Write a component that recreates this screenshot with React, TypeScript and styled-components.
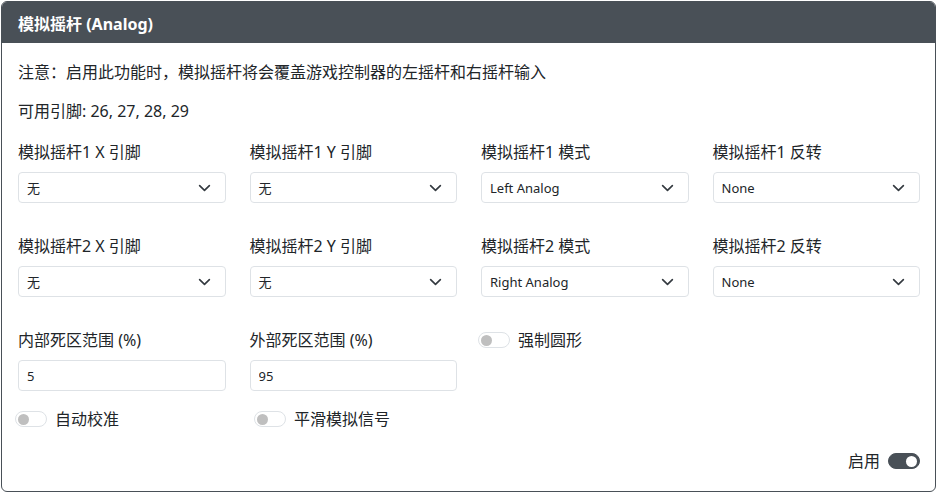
import React, { useState } from 'react'
import styled, { createGlobalStyle } from 'styled-components'

const GlobalStyle = createGlobalStyle`
  html, body {
    margin: 0;
    padding: 0;
    background: #ffffff;
  }
  body {
    font-family: "Noto Sans", "Noto Sans CJK SC", sans-serif;
    color: #212529;
  }
  * { box-sizing: border-box; }
`

const Page = styled.div`
  padding: 1px;
  width: 937px;
  height: 493px;
`

const Card = styled.div`
  width: 935px;
  height: 491px;
  border: 1px solid #495057;
  border-radius: 6px;
  overflow: hidden;
  display: flex;
  flex-direction: column;
`

const Header = styled.div`
  height: 41px;
  background: #495057;
  color: #ffffff;
  font-weight: bold;
  font-size: 16px;
  display: flex;
  align-items: center;
  padding-left: 16px;
`

const Body = styled.div`
  flex: 1;
  padding: 18px 16px 0 16px;
  display: flex;
  flex-direction: column;
`

const Text = styled.p<{ $gap: number }>`
  margin: 0 0 ${p => p.$gap}px 0;
  font-size: 16px;
  line-height: 22px;
`

const Grid = styled.div`
  display: grid;
  grid-template-columns: repeat(4, minmax(0, 1fr));
  column-gap: 24px;
  row-gap: 32px;
  width: 902px;
`

const Field = styled.div`
  display: flex;
  flex-direction: column;
  min-width: 0;
`

const Label = styled.label`
  font-size: 16px;
  line-height: 22px;
  margin-bottom: 9px;
`

const SelectBox = styled.div`
  height: 31px;
  border: 1px solid #dee2e6;
  border-radius: 4px;
  display: flex;
  align-items: center;
  justify-content: space-between;
  padding: 0 14px 0 8px;
  font-size: 13px;
  color: #212529;
  background: #fff;
`

const Input = styled.input`
  width: 100%;
  height: 31px;
  border: 1px solid #dee2e6;
  border-radius: 4px;
  padding: 0 8px;
  font-size: 13px;
  font-family: "Noto Sans", "Noto Sans CJK SC", sans-serif;
  color: #212529;
  outline: none;
`

const SwitchTrack = styled.span<{ $on: boolean }>`
  display: inline-flex;
  align-items: center;
  justify-content: ${p => (p.$on ? 'flex-end' : 'flex-start')};
  width: 32px;
  height: 16px;
  border-radius: 8px;
  padding: 0 2px;
  border: 1px solid ${p => (p.$on ? '#495057' : '#dee2e6')};
  background: ${p => (p.$on ? '#495057' : '#ffffff')};
  flex-shrink: 0;
  cursor: pointer;
`

const Knob = styled.span<{ $on: boolean }>`
  width: 11px;
  height: 11px;
  border-radius: 50%;
  background: ${p => (p.$on ? '#ffffff' : '#bfbfbf')};
`

const SwitchLabel = styled.label<{ $shift: number }>`
  display: flex;
  align-items: center;
  gap: 8px;
  font-size: 16px;
  line-height: 22px;
  margin-left: ${p => p.$shift}px;
  cursor: pointer;
`

const ToggleRow = styled.div`
  display: grid;
  grid-template-columns: 239px 1fr;
  margin-top: 17px;
  margin-left: -3px;
`

const Footer = styled.div`
  display: flex;
  justify-content: flex-end;
  margin-top: auto;
  margin-bottom: 19px;
  width: 902px;
`

const Chevron = () => (
  <svg width="13" height="10" viewBox="0 0 16 12">
    <path d="m2 3 6 6 6-6" fill="none" stroke="#343a40" strokeWidth="2" strokeLinecap="round" strokeLinejoin="round" />
  </svg>
)

const Select = ({ value }: { value: string }) => (
  <SelectBox>
    <span>{value}</span>
    <Chevron />
  </SelectBox>
)

const Switch = ({ label, initial = false, shift = 0, right = false }: { label: string; initial?: boolean; shift?: number; right?: boolean }) => {
  const [on, setOn] = useState(initial)
  const track = (
    <SwitchTrack $on={on} onClick={() => setOn(!on)}>
      <Knob $on={on} />
    </SwitchTrack>
  )
  return (
    <SwitchLabel $shift={shift}>
      {right ? <><span>{label}</span>{track}</> : <>{track}<span>{label}</span></>}
    </SwitchLabel>
  )
}

const selects = [
  { label: '模拟摇杆1 X 引脚', value: '无' },
  { label: '模拟摇杆1 Y 引脚', value: '无' },
  { label: '模拟摇杆1 模式', value: 'Left Analog' },
  { label: '模拟摇杆1 反转', value: 'None' },
  { label: '模拟摇杆2 X 引脚', value: '无' },
  { label: '模拟摇杆2 Y 引脚', value: '无' },
  { label: '模拟摇杆2 模式', value: 'Right Analog' },
  { label: '模拟摇杆2 反转', value: 'None' },
]

const App = () => {
  return (
    <Page>
      <GlobalStyle />
      <Card>
        <Header>模拟摇杆 (Analog)</Header>
        <Body>
          <Text $gap={17}>注意：启用此功能时，模拟摇杆将会覆盖游戏控制器的左摇杆和右摇杆输入</Text>
          <Text $gap={19}>可用引脚: 26, 27, 28, 29</Text>
          <Grid>
            {selects.map(s => (
              <Field key={s.label}>
                <Label>{s.label}</Label>
                <Select value={s.value} />
              </Field>
            ))}
            <Field>
              <Label>内部死区范围 (%)</Label>
              <Input defaultValue="5" />
            </Field>
            <Field>
              <Label>外部死区范围 (%)</Label>
              <Input defaultValue="95" />
            </Field>
            <Field>
              <Switch label="强制圆形" shift={-3} />
            </Field>
          </Grid>
          <ToggleRow>
            <Switch label="自动校准" />
            <Switch label="平滑模拟信号" />
          </ToggleRow>
          <Footer>
            <Switch label="启用" initial right />
          </Footer>
        </Body>
      </Card>
    </Page>
  )
}

export default App
